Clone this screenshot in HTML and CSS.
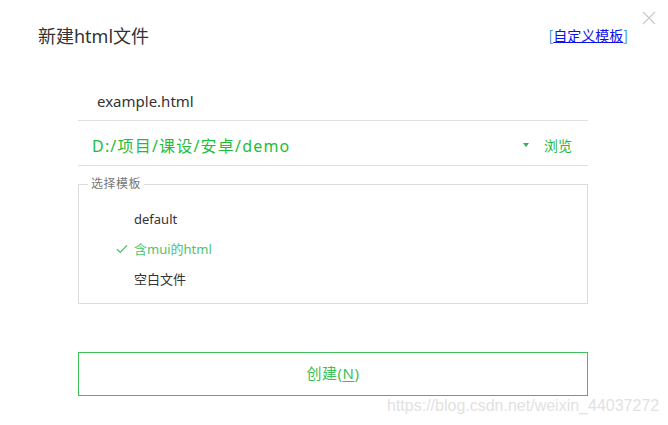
FILE: index.html
```html
<!DOCTYPE html>
<html lang="zh-CN">
<head>
<meta charset="utf-8">
<title>新建html文件</title>
<link rel="stylesheet" href="styles.css">
</head>
<body>
<div class="dialog">
  <button class="close" aria-label="关闭">
    <svg width="14" height="14" viewBox="0 0 14 14"><path d="M1 1L13 13M13 1L1 13" stroke="#c8c8c8" stroke-width="1.1" fill="none"/></svg>
  </button>
  <header class="head">
    <h1 class="title">新建html文件</h1>
    <a class="tpl-link" href="#"><span class="br">[</span><span class="lk">自定义模板</span><span class="br">]</span></a>
  </header>
  <div class="form">
    <div class="row name-row">example.html</div>
    <div class="row path-row">
      <span class="path">D:/项目/课设/安卓/demo</span>
      <span class="caret"></span>
      <span class="browse">浏览</span>
    </div>
    <fieldset class="tpl">
      <legend>选择模板</legend>
      <ul class="list">
        <li class="item">default</li>
        <li class="item sel"><svg class="check" width="12" height="10" viewBox="0 0 12 10"><path d="M1 5.2L4.2 8.4L11 1.4" stroke="#4cbf6a" stroke-width="1.3" fill="none"/></svg>含mui的html</li>
        <li class="item">空白文件</li>
      </ul>
    </fieldset>
    <button class="create">创建(<u>N</u>)</button>
  </div>
  <div class="watermark">https://blog.csdn.net/weixin_44037272</div>
</div>
</body>
</html>
```
FILE: styles.css
```css
html, body {
  margin: 0;
  padding: 0;
  background: #fff;
}
body {
  font-family: "Noto Sans", "Noto Sans CJK SC", sans-serif;
  color: #333;
}
.dialog {
  position: relative;
  width: 668px;
  height: 425px;
  overflow: hidden;
}
.close {
  position: absolute;
  top: 10px;
  right: 11px;
  width: 16px;
  height: 16px;
  padding: 0;
  border: 0;
  background: none;
  display: flex;
  align-items: center;
  justify-content: center;
}
.head {
  display: flex;
  justify-content: space-between;
  align-items: center;
  padding: 22px 40px 0 38px;
  height: 28px;
}
.title {
  margin: 0;
  font-size: 18px;
  font-weight: normal;
  line-height: 28px;
  color: #333;
  font-family: "Noto Sans", "Noto Sans CJK SC", sans-serif;
}
.tpl-link {
  font-size: 14px;
  line-height: 18px;
  text-decoration: none;
  font-family: "Noto Sans CJK SC", sans-serif;
  margin-top: -3px;
}
.tpl-link .br {
  color: #1e8fe0;
}
.tpl-link .lk {
  color: #1010ee;
  text-decoration: underline;
}
.form {
  margin: 32px 0 0 78px;
  width: 510px;
}
.row {
  border-bottom: 1px solid #e0e0e0;
  display: flex;
  align-items: center;
}
.name-row {
  height: 38px;
  padding-left: 19px;
  font-size: 15px;
  color: #333;
}
.path-row {
  box-sizing: border-box;
  height: 45px;
  padding: 3px 16px 0 14px;
  font-size: 15px;
}
.path {
  flex: 1;
  color: #1fbd3a;
  font-size: 16px;
  letter-spacing: 1.2px;
}
.caret {
  width: 0;
  height: 0;
  border-left: 3px solid transparent;
  border-right: 3px solid transparent;
  border-top: 4px solid #3aa860;
  margin-right: 15px;
  margin-top: 0;
}
.browse {
  color: #22b83a;
  font-size: 14px;
}
.tpl {
  margin: 10px 0 0;
  padding: 12px 0 6px;
  border: 1px solid #dcdcdc;
  box-sizing: border-box;
  height: 128px;
}
.tpl legend {
  margin-left: 9px;
  padding: 0 3px;
  font-size: 12px;
  line-height: 16px;
  color: #777;
  letter-spacing: 0.5px;
}
.list {
  list-style: none;
  margin: 0;
  padding: 0;
}
.item {
  position: relative;
  height: 30px;
  line-height: 30px;
  padding-left: 55px;
  font-size: 13px;
  color: #333;
}
.item.sel {
  color: #4cc46a;
}
.check {
  position: absolute;
  left: 37px;
  top: 10px;
}
.create {
  display: block;
  margin-top: 48px;
  width: 510px;
  height: 44px;
  border: 1px solid #3cc15a;
  background: #fff;
  color: #3cc15a;
  font-size: 15px;
  line-height: 20px;
  letter-spacing: 0.5px;
  font-family: "Noto Sans", "Noto Sans CJK SC", sans-serif;
  padding: 0 0 3px;
}
.create u {
  text-underline-offset: 2px;
}
.watermark {
  position: absolute;
  left: 387px;
  top: 396px;
  font-family: "Liberation Sans", Arial, sans-serif;
  font-size: 16px;
  line-height: 20px;
  color: #e2e2e2;
  white-space: nowrap;
}
```
